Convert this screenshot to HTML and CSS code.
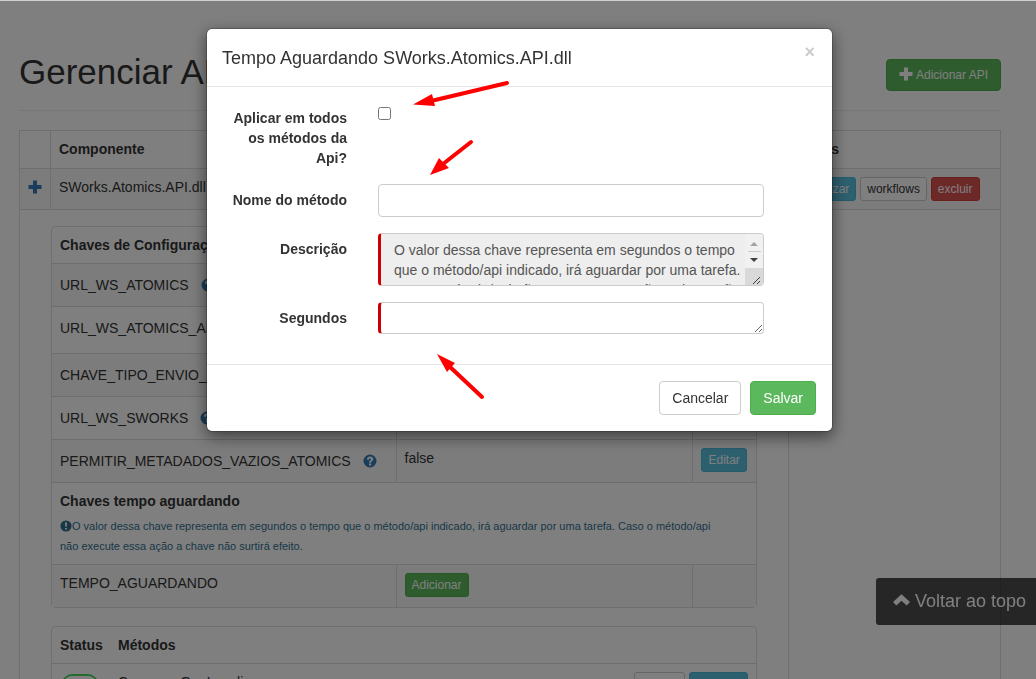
FILE: index.html
```html
<!DOCTYPE html>
<html lang="pt-BR">
<head>
    <meta charset="UTF-8">
    <meta name="viewport" content="width=device-width, initial-scale=1.0">
    <title>Gerenciar API</title>
    <link rel="stylesheet" href="styles.css">
</head>
<body class="modal-open">
    <svg class="sprite" aria-hidden="true">
        <symbol id="icon-plus" viewBox="0 0 14 14">
            <path d="M5 .5h4V5h4.500v4H9v4.500H5V9H.5V5H5z"/>
        </symbol>
        <symbol id="icon-question" viewBox="0 0 14 14">
            <path fill-rule="evenodd" d="M7 .5a6.500 6.500 0 1 1 0 13a6.500 6.500 0 0 1 0-13zM6 9.500v2h2.200v-2zM3.900 5.700h2c0-.9.400-1.300 1.100-1.300.7 0 1 .3 1 .8 0 .5-.3.800-.9 1.200C6.300 6.900 6 7.500 6 8.700h2.100c0-.7.300-1 .9-1.400.8-.5 1.300-1.200 1.300-2.200C10.300 3.500 9 2.500 7.100 2.500 5.200 2.500 3.900 3.700 3.900 5.700z"/>
        </symbol>
        <symbol id="icon-exclamation" viewBox="0 0 14 14">
            <path fill-rule="evenodd" d="M7 .5a6.500 6.500 0 1 1 0 13a6.500 6.500 0 0 1 0-13zM5.700 2.800l.5 5.200h1.600l.5-5.200zM5.900 9.200v2h2.200v-2z"/>
        </symbol>
        <symbol id="icon-chevron-up" viewBox="0 0 16 12">
            <path d="M8 0l8 7.500-3.200 3.200L8 6.200l-4.800 4.500L0 7.500z"/>
        </symbol>
    </svg>

    <div class="container">
        <header class="page-header">
            <h1>Gerenciar API</h1>
            <button type="button" class="btn btn-success btn-add"><svg class="icon"><use href="#icon-plus"/></svg> Adicionar API</button>
        </header>

        <table class="table table-main">
            <thead>
                <tr>
                    <th class="col-toggle"></th>
                    <th>Componente</th>
                    <th class="col-actions">Ações</th>
                </tr>
            </thead>
            <tbody>
                <tr class="row-component">
                    <td class="col-toggle"><a href="#detalhes" aria-label="Expandir"><svg class="icon"><use href="#icon-plus"/></svg></a></td>
                    <td>SWorks.Atomics.API.dll</td>
                    <td class="actions">
                        <button type="button" class="btn btn-sm btn-info">atualizar</button>
                        <button type="button" class="btn btn-sm btn-default">workflows</button>
                        <button type="button" class="btn btn-sm btn-danger">excluir</button>
                    </td>
                </tr>
                <tr id="detalhes">
                    <td colspan="2" class="details">
                        <div class="panel">
                            <table class="table table-keys">
                                <colgroup>
                                    <col class="col-key">
                                    <col>
                                    <col class="col-edit">
                                </colgroup>
                                <thead>
                                    <tr><th colspan="3">Chaves de Configuração</th></tr>
                                </thead>
                                <tbody>
                                    <tr>
                                        <td class="key">URL_WS_ATOMICS <a href="#" aria-label="Ajuda"><svg class="icon"><use href="#icon-question"/></svg></a></td>
                                        <td></td>
                                        <td><button type="button" class="btn btn-sm btn-info">Editar</button></td>
                                    </tr>
                                    <tr class="tall">
                                        <td class="key">URL_WS_ATOMICS_ANALISE <a href="#" aria-label="Ajuda"><svg class="icon"><use href="#icon-question"/></svg></a></td>
                                        <td></td>
                                        <td><button type="button" class="btn btn-sm btn-info">Editar</button></td>
                                    </tr>
                                    <tr>
                                        <td class="key">CHAVE_TIPO_ENVIO_ATOMICS <a href="#" aria-label="Ajuda"><svg class="icon"><use href="#icon-question"/></svg></a></td>
                                        <td></td>
                                        <td><button type="button" class="btn btn-sm btn-info">Editar</button></td>
                                    </tr>
                                    <tr>
                                        <td class="key">URL_WS_SWORKS <a href="#" aria-label="Ajuda"><svg class="icon"><use href="#icon-question"/></svg></a></td>
                                        <td></td>
                                        <td><button type="button" class="btn btn-sm btn-info">Editar</button></td>
                                    </tr>
                                    <tr>
                                        <td class="key">PERMITIR_METADADOS_VAZIOS_ATOMICS <a href="#" aria-label="Ajuda"><svg class="icon"><use href="#icon-question"/></svg></a></td>
                                        <td>false</td>
                                        <td><button type="button" class="btn btn-sm btn-info">Editar</button></td>
                                    </tr>
                                    <tr>
                                        <td colspan="3">
                                            <strong>Chaves tempo aguardando</strong>
                                            <p class="hint"><svg class="icon"><use href="#icon-exclamation"/></svg>O valor dessa chave representa em segundos o tempo que o método/api indicado, irá aguardar por uma tarefa. Caso o método/api não&nbsp;execute essa ação a chave não surtirá efeito.</p>
                                        </td>
                                    </tr>
                                    <tr class="row-wait">
                                        <td>TEMPO_AGUARDANDO</td>
                                        <td><button type="button" class="btn btn-sm btn-success">Adicionar</button></td>
                                        <td></td>
                                    </tr>
                                </tbody>
                            </table>
                        </div>

                        <div class="panel">
                            <table class="table table-methods">
                                <thead>
                                    <tr>
                                        <th class="col-status">Status</th>
                                        <th colspan="2">Métodos</th>
                                    </tr>
                                </thead>
                                <tbody>
                                    <tr>
                                        <td class="col-status"><input type="checkbox" class="switch" aria-label="Status" checked></td>
                                        <td>CompararGapLocalizacao</td>
                                        <td class="actions right">
                                            <button type="button" class="btn btn-sm btn-default">tarefas</button>
                                            <button type="button" class="btn btn-sm btn-info">detalhes</button>
                                        </td>
                                    </tr>
                                </tbody>
                            </table>
                        </div>
                    </td>
                    <td></td>
                </tr>
            </tbody>
        </table>
    </div>

    <a href="#" class="back-to-top"><svg class="icon"><use href="#icon-chevron-up"/></svg> Voltar ao topo</a>

    <div class="modal-backdrop"></div>

    <div class="modal">
        <form class="modal-content" role="dialog" aria-labelledby="modalTitle">
            <div class="modal-header">
                <h4 id="modalTitle">Tempo Aguardando SWorks.Atomics.API.dll</h4>
                <button type="button" class="close" aria-label="Fechar">×</button>
            </div>
            <div class="modal-body">
                <div class="form-group">
                    <label for="aplicarTodos">Aplicar em todos os métodos da Api?</label>
                    <div class="field"><input type="checkbox" id="aplicarTodos"></div>
                </div>
                <div class="form-group">
                    <label for="metodo">Nome do método</label>
                    <div class="field"><input type="text" id="metodo" class="form-control"></div>
                </div>
                <div class="form-group">
                    <label for="descricao">Descrição</label>
                    <div class="field">
                        <textarea id="descricao" class="form-control required description" readonly>O valor dessa chave representa em segundos o tempo que o método/api indicado, irá aguardar por uma tarefa. Caso o método/api não execute essa ação a chave não surtirá efeito.</textarea>
                        <svg class="scrollbar" viewBox="0 0 18 51" aria-hidden="true">
                            <path fill="#f1f1f1" d="M0 0h18v51H0z"/>
                            <path fill="#d9d9d9" d="M0 34h18v17H0z"/>
                            <path fill="#a3a3a3" d="M5 12l4-4 4 4z"/>
                            <path fill="#ccc" d="M3 17h13v1H3z"/>
                            <path fill="#404040" d="M5 24l4 4 4-4z"/>
                            <path stroke="#404040" d="M8 50l7-7M12 50l3-3"/>
                        </svg>
                    </div>
                </div>
                <div class="form-group">
                    <label for="segundos">Segundos</label>
                    <div class="field"><textarea id="segundos" class="form-control required seconds"></textarea></div>
                </div>
            </div>
            <div class="modal-footer">
                <button type="button" class="btn btn-default">Cancelar</button>
                <button type="submit" class="btn btn-success">Salvar</button>
            </div>
            <svg class="arrows" viewBox="0 0 625 402" aria-hidden="true">
                <path class="shaft" d="M300 54L224 72M264 113L236 135M275 368L242 337"/>
                <path class="head" d="M206 75.500L225 65L228 77zM223 146L232 129L242 139zM230 325L248 334L240 343z"/>
            </svg>
        </form>
    </div>
</body>
</html>
```

FILE: styles.css
```css
:root {
    --text-color: #333;
    --border-color: #ddd;
    --link-color: #337ab7;
    --success-color: #5cb85c;
    --info-color: #5bc0de;
    --danger-color: #d9534f;
    --required-color: #c00;
}

* {
    box-sizing: border-box;
}

body {
    margin: 0;
    font-family: "Liberation Sans", Arial, sans-serif;
    font-size: 14px;
    line-height: 20px;
    color: var(--text-color);
    background-color: #fff;
}

.modal-open {
    height: 100vh;
    overflow: hidden;
}

.sprite {
    display: none;
}

.icon {
    width: 14px;
    height: 14px;
    fill: currentColor;
    vertical-align: -2px;
}

a {
    color: var(--link-color);
    text-decoration: none;
}

.container {
    padding: 53px 35px 0 19px;
}

.page-header {
    display: flex;
    justify-content: space-between;
    align-items: flex-start;
    padding-bottom: 19px;
    margin-bottom: 19px;
    border-bottom: 1px solid #eee;
}

h1 {
    margin: 0;
    font-size: 35px;
    line-height: 38px;
    font-weight: 400;
}

/* Buttons */
.btn {
    font-family: inherit;
    font-size: 14px;
    line-height: 20px;
    padding: 6px 12px;
    border: 1px solid transparent;
    border-radius: 4px;
    cursor: pointer;
}

.btn-sm {
    font-size: 12px;
    line-height: 18px;
    padding: 2px 6px;
    border-radius: 3px;
    vertical-align: top;
}

.btn-add {
    margin-top: 6px;
    font-size: 12px;
    line-height: 18px;
}

.btn-default {
    color: #333;
    background-color: #fff;
    border-color: #ccc;
}

.btn-success {
    color: #fff;
    background-color: var(--success-color);
    border-color: #4cae4c;
}

.btn-info {
    color: #fff;
    background-color: var(--info-color);
    border-color: #46b8da;
}

.btn-danger {
    color: #fff;
    background-color: var(--danger-color);
    border-color: #d43f3a;
}

/* Tables */
.table {
    width: 100%;
    border-collapse: collapse;
    table-layout: fixed;
}

.table th,
.table td {
    padding: 8px;
    text-align: left;
    vertical-align: top;
    border: 1px solid var(--border-color);
}

.table-main > thead th {
    height: 38px;
}

.row-component {
    height: 41px;
    background-color: #f9f9f9;
}

.table .col-toggle {
    width: 31px;
    text-align: center;
}

.col-actions {
    width: 212px;
}

.actions {
    white-space: nowrap;
}

.table .right {
    text-align: right;
}

.table .details {
    padding: 16px 31px;
}

.panel {
    margin-bottom: 18px;
    border: 1px solid var(--border-color);
    border-radius: 4px;
}

.panel .table th,
.panel .table td {
    border-width: 1px 0 0 1px;
}

.panel .table th:first-child,
.panel .table td:first-child {
    border-left: 0;
}

.panel .table thead th {
    border-top: 0;
}

.table-keys tbody tr:nth-child(odd) {
    background-color: #f9f9f9;
}

.col-key {
    width: 344px;
}

.col-edit {
    width: 63px;
}

.table-keys .key {
    line-height: 26px;
}

.key a {
    margin-left: 8px;
}

.tall {
    height: 47px;
}

.row-wait {
    height: 42px;
}

.hint {
    margin: 5px 0 0;
    font-size: 11px;
    color: #31708f;
}

.hint .icon {
    width: 12px;
    height: 12px;
}

.table-methods .col-status {
    width: 58px;
}

.panel .table-methods th,
.panel .table-methods td {
    border-left: 0;
}

.switch {
    appearance: none;
    width: 36px;
    height: 20px;
    margin: 2px;
    border: 2px solid #4cd964;
    border-radius: 10px;
}

/* Back to top */
.back-to-top {
    position: fixed;
    right: 0;
    bottom: 54px;
    padding: 13px 10px 14px 17px;
    font-size: 18px;
    color: #fff;
    background-color: rgba(0, 0, 0, 0.7);
    border-radius: 3px 0 0 3px;
}

.back-to-top .icon {
    width: 17px;
    height: 13px;
    vertical-align: 0;
}

/* Modal */
.modal-backdrop {
    position: fixed;
    inset: 0;
    background-color: rgba(0, 0, 0, 0.5);
    border-top: 1px solid #ced3cf;
}

.modal {
    position: fixed;
    inset: 0;
    padding: 28px 203px 0 206px;
}

.modal-content {
    position: relative;
    background-color: #fff;
    border: 1px solid rgba(0, 0, 0, 0.2);
    border-radius: 6px;
    background-clip: padding-box;
    box-shadow: 0 5px 15px rgba(0, 0, 0, 0.5);
}

.modal-header {
    display: flex;
    justify-content: space-between;
    align-items: flex-start;
    padding: 16px 15px 15px;
    border-bottom: 1px solid #e5e5e5;
}

.modal-header h4 {
    margin: 0;
    font-size: 18px;
    line-height: 26px;
    font-weight: 400;
}

.close {
    padding: 0 2px;
    font-family: inherit;
    font-size: 18px;
    font-weight: 700;
    line-height: 14px;
    color: #ccc;
    background: none;
    border: 0;
    cursor: pointer;
}

.modal-body {
    padding: 15px 15px 14px;
}

.form-group {
    display: flex;
    margin-bottom: 16px;
}

.form-group label {
    width: 125px;
    padding-top: 6px;
    font-weight: 700;
    text-align: right;
}

.field {
    position: relative;
    flex: 1;
    margin: 0 53px 0 31px;
}

.field input[type="checkbox"] {
    display: block;
    width: 13px;
    height: 13px;
    margin: 5px 0 0;
}

.form-control {
    display: block;
    width: 100%;
    height: 33px;
    padding: 6px 12px;
    font-family: inherit;
    font-size: 14px;
    line-height: 20px;
    color: #555;
    background-color: #fff;
    border: 1px solid #ccc;
    border-radius: 4px;
}

.required {
    border-left: 3px solid var(--required-color);
}

.description {
    height: 53px;
    padding: 6px 21px 6px 13px;
    background-color: #eee;
    resize: none;
}

.scrollbar {
    position: absolute;
    top: 1px;
    right: 1px;
    width: 18px;
    height: 51px;
    border-radius: 0 3px 3px 0;
    pointer-events: none;
}

.seconds {
    height: 32px;
    overflow: hidden;
}

.modal-footer {
    display: flex;
    justify-content: flex-end;
    gap: 9px;
    padding: 16px;
    border-top: 1px solid #e5e5e5;
}

/* Arrows drawn over the dialog */
.arrows {
    position: absolute;
    top: 0;
    left: 0;
    width: 625px;
    height: 402px;
    pointer-events: none;
}

.arrows .shaft {
    fill: none;
    stroke: #f00;
    stroke-width: 4;
    stroke-linecap: round;
}

.arrows .head {
    fill: #f00;
}
```
